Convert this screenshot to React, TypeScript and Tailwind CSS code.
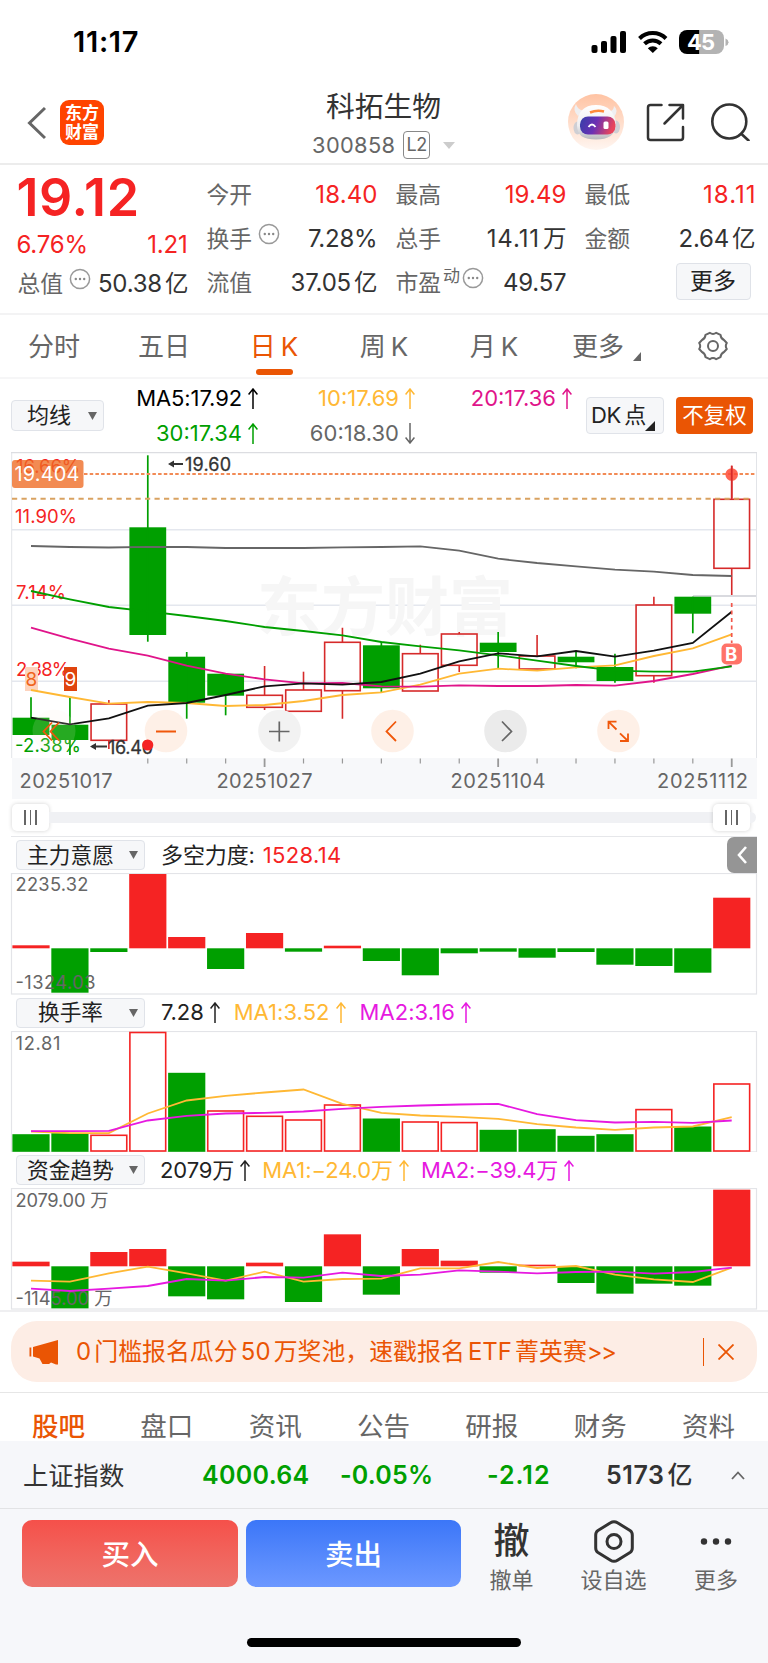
import React from 'react';

const RED = '#f52323';
const GREEN = '#009f00';
const YELLOW = '#ffb834';
const MAGENTA = '#e619e0';
const PINK = '#e0148a';
const CANDLE_RED = '#d62a2a';

const cx = (i: number) => 31 + i * 38.93;

type Pts = number[];
const line = (ys: Pts) => ys.map((y, i) => `${cx(i).toFixed(1)},${y}`).join(' ');

function Arrow({ down = false }: { down?: boolean }) {
  return (
    <svg viewBox="0 0 10 21" className="ml-1.5 h-[21px] w-2.5 shrink-0" fill="none" stroke="currentColor" strokeWidth="1.5">
      <path d={down ? 'M5 0V20M0.600 14.500L5 20L9.400 14.500' : 'M5 21V1M0.600 6.500L5 1L9.400 6.500'} />
    </svg>
  );
}

function Info() {
  return (
    <svg viewBox="0 0 22 22" className="mb-2.5 ml-1.5 h-[22px] w-[22px] shrink-0" fill="none" stroke="#999" strokeWidth="1.5">
      <circle cx="11" cy="11" r="9.6" />
      <g fill="#888" stroke="none">
        <circle cx="6.8" cy="11" r="1.2" />
        <circle cx="11" cy="11" r="1.2" />
        <circle cx="15.2" cy="11" r="1.2" />
      </g>
    </svg>
  );
}

function StatusBar() {
  return (
    <div className="flex h-[84px] items-center justify-between pl-[73px] pr-[38px]">
      <span className="text-[29px] font-semibold tracking-[0.7px] text-black">11:17</span>
      <svg viewBox="590 28 140 28" className="h-7 w-[140px]">
        <rect x="591.5" y="45" width="6" height="8" rx="2" />
        <rect x="601" y="41" width="6" height="12" rx="2" />
        <rect x="610.5" y="36" width="6" height="17" rx="2" />
        <rect x="620" y="31" width="6" height="22" rx="2" />
        <g fill="none" stroke="#000" strokeWidth="4">
          <path d="M639.5 38.5a19 19 0 0 1 26.500 0" />
          <path d="M644.5 43.800a12 12 0 0 1 16.500 0" />
        </g>
        <path d="M647.800 48.200a7.200 7.200 0 0 1 10 0L652.800 53Z" />
        <path d="M687 30h12.500v24H687a8 8 0 0 1-8-8v-8a8 8 0 0 1 8-8Z" />
        <path d="M699.500 30H716a8 8 0 0 1 8 8v8a8 8 0 0 1-8 8h-16.500Z" fill="#b3b3b3" />
        <path d="M725.500 38.500q3 1.200 3 3.800t-3 3.800Z" fill="#b3b3b3" />
        <text x="687" y="50" fill="#fff" fontSize="22" fontWeight="700" textLength="28" fontFamily="Inter, sans-serif">45</text>
      </svg>
    </div>
  );
}

function Header() {
  return (
    <header className="flex h-[81px] border-b-2 border-[#ececec]">
      <div className="flex w-[220px] items-center pb-[2px] pl-[26px]">
        <svg viewBox="0 0 20 34" className="h-[34px] w-5" fill="none" stroke="#666" strokeWidth="3">
          <path d="M19 2L3.500 17L19 32" />
        </svg>
        <div className="ml-[14px] flex h-[44.5px] w-[44px] flex-col items-center justify-center rounded-[9px] bg-[#ff4400] text-[17px] font-bold leading-[19px] text-white">
          <span>东方</span>
          <span>财富</span>
        </div>
      </div>
      <div className="flex flex-1 flex-col items-center pr-px">
        <h1 className="mt-[5px] text-[28.8px] leading-9 text-[#333]">科拓生物</h1>
        <div className="mt-[3px] flex items-center leading-[34px]">
          <span className="text-[21.8px] tracking-[0.35px] text-[#666]">300858</span>
          <span className="ml-2 flex h-[27.500px] w-[26.500px] items-center justify-center rounded-[4px] border-[1.5px] border-[#888] text-[18px] tracking-[-0.5px] text-[#666]">L2</span>
          <svg viewBox="0 0 12 7" className="ml-[13px] h-[7px] w-3">
            <path d="M0 0H12L6 7Z" fill="#ccc" />
          </svg>
        </div>
      </div>
      <div className="flex w-[220px] items-start justify-end pr-[18px] pt-[9px]">
        <svg viewBox="0 0 56 56" className="mt-px h-14 w-14">
          <defs>
            <linearGradient id="halo" x1="0" y1="0" x2="0" y2="1">
              <stop offset="0" stopColor="#ffc3a3" />
              <stop offset="1" stopColor="#fff6f1" />
            </linearGradient>
            <linearGradient id="head" x1="0" y1="0" x2="0" y2="1">
              <stop offset="0" stopColor="#fff" />
              <stop offset="0.600" stopColor="#eeeef0" />
              <stop offset="1" stopColor="#b9b9be" />
            </linearGradient>
            <linearGradient id="visor" x1="0" y1="0" x2="1" y2="0.200">
              <stop offset="0" stopColor="#3440a8" />
              <stop offset="0.500" stopColor="#6b30b4" />
              <stop offset="1" stopColor="#e8455c" />
            </linearGradient>
          </defs>
          <circle cx="28" cy="28" r="28" fill="url(#halo)" />
          <path d="M8 10Q4 16 10 22L15 17Q9 15 8 10ZM46 12Q51 16 46 23L40 18Q46 17 46 12Z" fill="#efeff1" />
          <ellipse cx="9.500" cy="34" rx="4" ry="6.500" fill="#cfcfd4" />
          <ellipse cx="48" cy="33" rx="4" ry="6.500" fill="#cfcfd4" />
          <path d="M28 11C40 11 47 18 48 30C48 41 40 45.500 28 45.500S9 42 9 31C9 18 16 11 28 11Z" fill="url(#head)" />
          <path d="M22 18.500Q29 15.500 36 17.500" stroke="#ff8b3c" strokeWidth="2.500" fill="none" />
          <rect x="12" y="22.500" width="35.500" height="18" rx="8" fill="url(#visor)" />
          <path d="M20.500 33q3.500-5 7 0" stroke="#fff" strokeWidth="1.800" fill="none" />
          <rect x="35.500" y="27.500" width="5" height="7.500" rx="1.500" fill="#fff" />
        </svg>
        <svg viewBox="0 0 40 40" className="ml-[21px] mt-[9px] h-10 w-10" fill="none" stroke="#333" strokeWidth="2.500" strokeLinecap="round" strokeLinejoin="round">
          <path d="M16.500 3H5.500Q3 3 3 5.500V35.500Q3 38 5.500 38H35.500Q38 38 38 35.500V25M24.500 3H38V16.500M38 3L19.500 21.500" />
        </svg>
        <svg viewBox="0 0 40 40" className="ml-[25px] mt-2 h-10 w-10" fill="none" stroke="#333" strokeWidth="2.600" strokeLinecap="round">
          <circle cx="19.300" cy="20.500" r="17" />
          <path d="M31.500 33L38.500 39.500" />
        </svg>
      </div>
    </header>
  );
}

type CellProps = { label: React.ReactNode; value: string; unit?: string; red?: boolean; info?: boolean; track?: string };

function Cell({ label, value, unit, red = false, info = false, track = 'tracking-[-0.2px]' }: CellProps) {
  return (
    <div className="flex h-[44.2px] w-[170px] items-center justify-between whitespace-nowrap">
      <span className="flex items-center text-[22.8px] text-[#666]">
        {label}
        {info && <Info />}
      </span>
      <span className={`-mr-px flex text-[24px] ${red ? 'text-[#f52323]' : 'text-[#333]'}`}>
        <span className={track}>{value}</span>
        {unit && <span className="ml-[3px] text-[23.500px]">{unit}</span>}
      </span>
    </div>
  );
}

function Quote() {
  return (
    <section className="flex h-[150px] gap-[19px] border-b-2 border-[#f3f3f4] pl-[17.5px] pt-[8px]">
      <div className="w-[170px]">
        <div className="flex h-[50px] items-center text-[52px] font-semibold tracking-[0.6px] text-[#f52323]">
          <span className="-ml-px">19.12</span>
        </div>
        <div className="flex h-[44px] items-center justify-between text-[24px] tracking-[-0.2px] text-[#f52323]">
          <span className="-ml-px">6.76%</span>
          <span>1.21</span>
        </div>
        <div className="-mt-[5px]">
          <Cell label="总值" value="50.38" unit="亿" info />
        </div>
      </div>
      <div>
        <Cell label="今开" value="18.40" red track="tracking-[0.1px]" />
        <Cell label="换手" value="7.28%" info />
        <Cell label="流值" value="37.05" unit="亿" />
      </div>
      <div>
        <Cell label="最高" value="19.49" red track="tracking-[0.1px]" />
        <Cell label="总手" value="14.11" unit="万" track="tracking-[0.9px]" />
        <Cell
          label={
            <>
              市盈
              <span className="mb-3.5 ml-0.5 -mr-1 text-[17px]">动</span>
            </>
          }
          value="49.57"
          info
        />
      </div>
      <div>
        <Cell label="最低" value="18.11" red track="tracking-[1px] -mr-px" />
        <Cell label="金额" value="2.64" unit="亿" />
        <div className="flex h-[41px] items-center justify-end pr-1">
          <button className="h-[37px] w-[75px] rounded-[4px] border-[1.5px] border-[#dfe2e8] bg-[#f6f7f9] text-[23px] leading-[33px] text-[#222]">更多</button>
        </div>
      </div>
    </section>
  );
}

function PeriodTabs() {
  const tabs = ['分时', '五日', '日 K', '周 K', '月 K'];
  return (
    <nav className="-ml-px flex h-16 border-b-2 border-[#f6f6f7] text-[26px] text-[#666]">
      {tabs.map((t, i) => (
        <div key={t} className={i === 2 ? 'flex w-[110px] flex-col items-center text-[#ea5504]' : 'flex w-[110px] flex-col items-center'}>
          <span className="mt-3 whitespace-nowrap leading-[39px] [word-spacing:-2.500px]">{t}</span>
          {i === 2 && <span className="mt-[3px] h-[5.500px] w-[37px] rounded-[3px] bg-[#ea5504]" />}
        </div>
      ))}
      <div className="ml-[23px] mt-3 flex leading-[39px]">
        更多
        <svg viewBox="0 0 8 9" className="ml-[9px] mt-[25px] h-[9px] w-2">
          <path d="M8 0V9H0Z" fill="#666" />
        </svg>
      </div>
      <svg viewBox="0 0 30 30" className="ml-[57px] mt-4 h-[30px] w-[30px]" fill="none" stroke="#666" strokeWidth="2">
        <path d="M11.800 1.800Q15 4 18.200 1.800L22.500 3.800Q22.800 7.500 26 9L28.800 12Q26.800 15 28.800 18L26 21Q22.800 22.500 22.500 26.200L18.200 28.200Q15 26 11.800 28.200L7.500 26.200Q7.200 22.500 4 21L1.200 18Q3.200 15 1.200 12L4 9Q7.200 7.500 7.500 3.800Z" strokeLinejoin="round" />
        <circle cx="15" cy="15" r="5" />
      </svg>
    </nav>
  );
}

function Ma({ text, cls, down = false }: { text: string; cls: string; down?: boolean }) {
  return (
    <span className={`flex w-[157px] items-center justify-end ${cls}`}>
      {text}
      <Arrow down={down} />
    </span>
  );
}

function MaRow() {
  return (
    <section className="flex h-[73px] pl-[11px]">
      <button className="mt-[21px] flex h-[31px] w-[93px] items-center rounded-[4px] border-[1.5px] border-[#e0e3e9] bg-[#f6f7f9] pl-[15px] text-[22px] text-[#222]">
        均线
        <svg viewBox="0 0 9 8" className="ml-[17px] h-2 w-[9px]">
          <path d="M0 0H9L4.500 8Z" fill="#666" />
        </svg>
      </button>
      <div className="ml-[-2px] w-[471px] text-[22px] leading-[35px]">
        <div className="-ml-px flex">
          <Ma text="MA5:17.92" cls="mt-[2px] text-black tracking-[-0.1px]" />
          <Ma text="10:17.69" cls="mt-[2px] text-[#ffb834]" />
          <Ma text="20:17.36" cls="mt-[2px] text-[#e0148a]" />
        </div>
        <div className="-ml-px flex">
          <Ma text="30:17.34" cls="text-[#009f00]" />
          <Ma text="60:18.30" cls="text-[#666]" down />
        </div>
      </div>
      <button className="ml-[13px] mt-[18px] flex h-[37px] w-[78px] items-center rounded-[4px] border-[1.5px] border-[#e0e3e9] bg-[#f6f7f9] pl-1 text-[22px] text-[#222]">
        <span className="whitespace-nowrap tracking-[-0.5px] [word-spacing:-2px]">DK 点</span>
        <svg viewBox="0 0 10 10" className="-ml-px mt-[20px] h-2.5 w-2.5">
          <path d="M10 0V10H0Z" fill="#222" />
        </svg>
      </button>
      <button className="ml-3 mt-[18px] h-[37px] w-[77px] rounded-[4px] bg-[#ea5504] text-[21.5px] text-white">不复权</button>
    </section>
  );
}

type Candle = [number, number, number, number, 'r' | 'g'];
const candles: Candle[] = [
  [717.7, 735, 697.3, 735, 'g'],
  [724.7, 740, 697.3, 755, 'g'],
  [704, 740.3, 700, 749, 'r'],
  [527.3, 635, 455.3, 641.7, 'g'],
  [656.7, 702.7, 652, 718.7, 'g'],
  [673.7, 695.7, 673.7, 715.3, 'g'],
  [695.3, 707.3, 666, 710, 'r'],
  [690, 711.3, 671.7, 711.3, 'r'],
  [642.3, 690.7, 627.7, 718.7, 'r'],
  [645.3, 688.3, 641.7, 692.3, 'g'],
  [653.7, 691, 644.7, 691, 'r'],
  [634, 665.3, 632, 672, 'r'],
  [642.7, 652, 632, 668.3, 'g'],
  [656, 669, 635, 669, 'r'],
  [656.7, 662.3, 651.7, 668.3, 'g'],
  [667, 681, 653.7, 682.7, 'g'],
  [605, 675.7, 596.7, 682.7, 'r'],
  [596.7, 613.7, 596.7, 633.3, 'g'],
  [499.3, 568.3, 465.7, 595, 'r'],
];

const ma60 = [546, 547, 547.5, 546.8, 547, 548, 548, 548, 547.3, 547, 546.3, 550.7, 558.7, 563, 566.3, 569.7, 571.7, 575, 576];
const ma30 = [591, 599.3, 607, 611.3, 616, 621, 627, 631, 635.3, 642, 646.3, 650.3, 655.3, 660.7, 666, 670.7, 671.7, 671.7, 666.3];
const ma20 = [627.7, 638.7, 648.7, 655.7, 665.7, 673.7, 679.3, 683.3, 683, 686.3, 686.7, 685.3, 686, 686, 685, 685.7, 681, 674, 665.7];
const ma10 = [690, 697, 703.7, 702, 703, 706, 705, 701, 695, 692.3, 684.7, 673.7, 668.7, 670.7, 667.3, 665.3, 656, 648.3, 634.3];
const ma5 = [717.7, 724.3, 718.3, 705.7, 703, 695, 686.3, 683.3, 684.7, 682, 673.7, 661.3, 653.3, 656.3, 651, 656.7, 650.7, 643, 611.7];

function CandleChart() {
  return (
    <svg viewBox="0 452 768 347" className="block h-[347px] w-[768px]" fontFamily="Inter, 'Noto Sans CJK SC', sans-serif">
      <rect x="12" y="758" width="745" height="41" fill="#f7f8fa" />
      <g stroke="#e4e7ee" strokeWidth="1.500">
        <path d="M12 529.7H756M12 605.3H756M12 681.3H756" />
        <path d="M11.700 452V758M756.500 452V758" stroke="#e2e4e8" strokeWidth="1" />
        <path d="M11 452.500H757" stroke="#dcdde1" />
      </g>
      <text x="257" y="630" fontSize="64" fontWeight="700" fill="#f6f6f6" textLength="256" lengthAdjust="spacingAndGlyphs">东方财富</text>
      <path d="M693 596H756" stroke="#d9dadf" strokeWidth="2" />
      <g fontSize="18.500" fill={RED}>
        <text x="16" y="472.500" textLength="64">16.66%</text>
        <text x="15" y="523" textLength="62">11.90%</text>
        <text x="16" y="599" textLength="50">7.14%</text>
        <text x="16" y="676" textLength="54">2.38%</text>
      </g>
      {candles.map(([t, b, h, l, c], i) => {
        const x = cx(i);
        return c === 'g' ? (
          <g key={i} fill={GREEN}>
            <rect x={x - 18.4} y={t} width="36.800" height={b - t} />
            <path d={`M${x} ${h}V${l}`} stroke={GREEN} strokeWidth="1.700" />
          </g>
        ) : (
          <g key={i} fill="none" stroke={CANDLE_RED} strokeWidth="1.600">
            <rect x={x - 17.8} y={t} width="35.600" height={b - t} />
            <path d={`M${x} ${h}V${t}M${x} ${b}V${l}`} />
          </g>
        );
      })}
      <path d="M12 498.700H751" stroke="#d9a261" strokeWidth="2" strokeDasharray="5.200 4.300" />
      <rect x="25" y="667" width="13" height="24" fill="#fdd3bd" />
      <text x="25.500" y="686" fontSize="19" fill="#f0631a">8</text>
      <rect x="64" y="667" width="13" height="24" fill="#e0440e" />
      <text x="64.500" y="686" fontSize="19" fill="#fff">9</text>
      <g fill="none" strokeWidth="1.800">
        <polyline points={line(ma60)} stroke="#666" />
        <polyline points={line(ma10)} stroke={YELLOW} />
        <polyline points={line(ma20)} stroke={PINK} />
        <polyline points={line(ma30)} stroke={GREEN} />
        <polyline points={line(ma5)} stroke="#111" />
      </g>
      <rect x="12" y="460" width="71.500" height="28" rx="3" fill="#ee6a22" fillOpacity="0.780" />
      <path d="M84 474H755" stroke="#f28a55" strokeWidth="1.900" strokeDasharray="3.500 2.200" />
      <text x="14.500" y="481" fontSize="20" fill="#fff" textLength="65">19.404</text>
      <circle cx="731.700" cy="474.500" r="6.300" fill="#ff4a35" fillOpacity="0.850" />
      <path d="M731.700 465.700V498" stroke={CANDLE_RED} strokeWidth="1.700" />
      <g stroke="#333" strokeWidth="2" fill="#333">
        <path d="M170 464H183" />
        <path d="M168 464L174 460.500V467.500Z" stroke="none" />
        <path d="M92 746.500H107" />
        <path d="M90 746.500L96 743V750Z" stroke="none" />
      </g>
      <g fill="#333" stroke="#333" strokeWidth="0.300" fontSize="18">
        <text x="185" y="470.500" textLength="46">19.60</text>
        <text x="108" y="753.500" textLength="45">16.40</text>
      </g>
      <path d="M731.700 603V643" stroke="#f2574b" strokeWidth="1.700" strokeDasharray="4 3.500" />
      <rect x="721.500" y="643.500" width="20.500" height="21" rx="5" fill="#ff7368" />
      <text x="725" y="661" fontSize="18.500" fontWeight="700" fill="#fff">B</text>
      <text x="15" y="752" fontSize="18.500" fill={GREEN} textLength="66">-2.38%</text>
      <g fill="#feeee4" fillOpacity="0.900">
        <circle cx="54" cy="731" r="21.500" fillOpacity="0.150" />
        <circle cx="166" cy="731" r="21.300" />
        <circle cx="392.500" cy="731" r="21.300" />
        <circle cx="618.500" cy="731" r="21.300" />
      </g>
      <circle cx="279.500" cy="731" r="21.300" fill="#f2f2f2" />
      <circle cx="505.500" cy="731" r="21.300" fill="#ebebeb" />
      <circle cx="147.700" cy="745" r="5.600" fill="#f52323" />
      <g fill="none" stroke="#f0570a" strokeWidth="1.800">
        <path d="M52 722.500L43.500 731.500L52 740.500M59 722.500L50.500 731.500L59 740.500" />
        <path d="M156 731.500H176M396 721.500L386.500 731.500L396 741" />
        <path d="M608.500 729V721.700H616.500M608.500 721.700L616.500 729.500M628 733.500V741H620M628 741L620 733.300" />
      </g>
      <g fill="none" stroke="#666" strokeWidth="1.700">
        <path d="M269 731.500H289.500M279.300 721.500V741.500M502 721.500L511.500 731.500L502 741" />
      </g>
      <g stroke="#999" strokeWidth="1.200">
        {candles.map((_, i) => (i < 3 ? null : <path key={i} d={`M${cx(i)} 758.500V${i % 6 === 0 ? 767 : 763.5}`} strokeWidth={i % 6 === 0 ? 1.8 : 1.2} />))}
      </g>
      <g fill="#666" fontSize="20">
        <text x="19.500" y="787.500" textLength="93">20251017</text>
        <text x="216.500" y="787.500" textLength="96">20251027</text>
        <text x="450.500" y="787.500" textLength="95">20251104</text>
        <text x="657" y="787.500" textLength="91">20251112</text>
      </g>
    </svg>
  );
}

function Grip() {
  return (
    <div className="flex h-[27px] w-[37px] items-center justify-center gap-[4px] rounded-[5px] bg-white shadow-[0_0_4px_rgba(0,0,0,0.18)]">
      <span className="h-[15px] w-[1.500px] bg-[#666]" />
      <span className="h-[15px] w-[1.500px] bg-[#666]" />
      <span className="h-[15px] w-[1.500px] bg-[#666]" />
    </div>
  );
}

function RangeSlider() {
  return (
    <div className="flex h-[37px] items-center px-[12px]">
      <Grip />
      <div className="h-[11px] flex-1 bg-[#f0f1f4]" />
      <Grip />
      <div className="h-[11px] w-[6px] rounded-r-full bg-[#f0f1f4]" />
    </div>
  );
}

function IndicatorHead({ name, children, collapse = false, size = 'h-9' }: { name: string; children: React.ReactNode; collapse?: boolean; size?: string }) {
  return (
    <div className={`mx-[11px] flex items-center ${size}`}>
      <button className="ml-[5px] flex h-[30px] w-[129px] shrink-0 items-center rounded-[4px] border-[1.5px] border-[#e0e3e9] bg-[#f6f7f9] text-[21.7px] text-[#222]">
        <span className="w-[107px] text-center">{name}</span>
        <svg viewBox="0 0 9 8" className="ml-[5px] h-2 w-[9px]">
          <path d="M0 0H9L4.500 8Z" fill="#666" />
        </svg>
      </button>
      <div className="ml-4 flex flex-1 items-center whitespace-nowrap text-[22px] tracking-[-0.1px] text-[#222]">{children}</div>
      {collapse && (
        <div className="flex h-full w-[30px] items-center justify-center rounded-l-[7px] bg-[#959595]">
          <svg viewBox="0 0 10 18" className="h-[18px] w-2.5" fill="none" stroke="#fff" strokeWidth="2.600">
            <path d="M9 1L2 9L9 17" />
          </svg>
        </div>
      )}
    </div>
  );
}

const power = [945.3, 992.7, 952, 874, 937, 969, 933, 951.7, 945.7, 961, 975.3, 953.3, 951.7, 957.7, 952, 964.7, 966, 972.7, 897.7];
const turnover = [1133.7, 1132.7, 1134.3, 1031.5, 1072.3, 1110, 1115.3, 1119, 1104, 1118, 1121, 1121.6, 1129.3, 1128.7, 1135.3, 1133.7, 1108.6, 1126, 1083];
const turnoverRed = [2, 3, 5, 6, 7, 8, 10, 11, 16, 18];
const turnMa1 = [333, 338, 338, 279, 240, 226, 216, 207, 250, 277, 285, 289, 295, 311, 321, 328, 321, 318, 290].map((v) => 1020 + v / 3);
const turnMa2 = [332, 332, 331, 300, 286, 279, 277, 273, 265, 259, 255, 252, 250, 281, 299, 306, 304, 307, 300].map((v) => 1020 + v / 3);
const funds = [320, 460, 291, 282, 424, 433, 323, 441, 238, 419, 282, 317, 353, 329, 384, 416, 386, 392, 104].map((v) => 1155 + v / 3);
const fundMa1 = [377, 380, 355, 335, 355, 377, 350, 380, 372, 371, 340, 340, 321, 339, 333, 359, 373, 381, 338].map((v) => 1155 + v / 3);
const fundMa2 = [401, 408, 401, 393, 372, 377, 366, 368, 353, 363, 359, 346, 350, 355, 351, 350, 356, 351, 338].map((v) => 1155 + v / 3);

function SignedBars({ ys, zero }: { ys: number[]; zero: number }) {
  return (
    <g>
      {ys.map((y, i) => (
        <rect key={i} x={cx(i) - 18.6} y={Math.min(y, zero)} width="37.200" height={Math.abs(y - zero)} fill={y < zero ? RED : GREEN} />
      ))}
    </g>
  );
}

function Frame({ top, children }: { top: number; children: React.ReactNode }) {
  return (
    <svg viewBox={`0 ${top} 768 121.500`} className="block h-[121.500px] w-[768px]" fontFamily="Inter, 'Noto Sans CJK SC', sans-serif">
      <rect x="11.500" y={top + 0.5} width="745" height="120.500" fill="none" stroke="#e3e4e8" strokeWidth="1.200" />
      {children}
    </svg>
  );
}

function Indicators() {
  return (
    <section>
      <div className="mx-[11px] h-px bg-[#e6e7ea]" />
      <IndicatorHead name="主力意愿" collapse>
        <span>多空力度:</span>
        <span className="ml-2 tracking-[0.3px] text-[#f52323]">1528.14</span>
      </IndicatorHead>
      <Frame top={873}>
        <SignedBars ys={power} zero={948.3} />
        <g fill="#666" fontSize="18.300">
          <text x="15.500" y="891" textLength="73">2235.32</text>
          <text x="15.500" y="989" textLength="80">-1324.03</text>
        </g>
      </Frame>
      <IndicatorHead name="换手率">
        <span>7.28</span>
        <Arrow />
        <span className="ml-3.5 tracking-[0.05px] text-[#ffb834]">MA1:3.52</span>
        <span className="text-[#ffb834]"><Arrow /></span>
        <span className="ml-3.5 tracking-[0.05px] text-[#e619e0]">MA2:3.16</span>
        <span className="text-[#e619e0]"><Arrow /></span>
      </IndicatorHead>
      <Frame top={1030.5}>
        {turnover.map((y, i) =>
          turnoverRed.includes(i) ? (
            <rect key={i} x={cx(i) - 17.9} y={y + 0.5} width="35.800" height={1150 - y} fill="none" stroke={RED} strokeWidth="1.600" />
          ) : (
            <rect key={i} x={cx(i) - 18.6} y={y} width="37.200" height={1151.3 - y} fill={GREEN} />
          ),
        )}
        <text x="15.500" y="1049" fill="#666" fontSize="18.300" textLength="45">12.81</text>
        <g fill="none" strokeWidth="1.800">
          <polyline points={line(turnMa1)} stroke={YELLOW} />
          <polyline points={line(turnMa2)} stroke={MAGENTA} />
        </g>
      </Frame>
      <IndicatorHead name="资金趋势">
        <span className="-ml-px">2079万</span>
        <Arrow />
        <span className="ml-3 text-[#ffb834]">MA1:−24.0万</span>
        <span className="text-[#ffb834]"><Arrow /></span>
        <span className="ml-3 text-[#e619e0]">MA2:−39.4万</span>
        <span className="text-[#e619e0]"><Arrow /></span>
      </IndicatorHead>
      <Frame top={1188}>
        <SignedBars ys={funds} zero={1266.3} />
        <g fill="#666" fontSize="18.300">
          <text x="15.500" y="1206.500" textLength="93">2079.00 万</text>
          <text x="15.500" y="1304.500" textLength="97">-1145.00 万</text>
        </g>
        <g fill="none" strokeWidth="1.800">
          <polyline points={line(fundMa1)} stroke={YELLOW} />
          <polyline points={line(fundMa2)} stroke={MAGENTA} />
        </g>
      </Frame>
    </section>
  );
}

function Banner() {
  return (
    <section className="h-[83.500px] border-b-[1.5px] border-t-2 border-b-[#e6e6e6] border-t-[#efeff1] px-[11px] pt-[9.500px]">
      <div className="flex h-[61px] items-center rounded-[26px] bg-[#fdede5] pl-[18px] pr-[23px] text-[#ea5504]">
        <svg viewBox="0 0 30 26" className="h-[26px] w-[30px]" fill="currentColor">
          <path d="M0.500 8.500H2.300V17.500H0.500ZM4 8L29 1V25.500H27L22 23.500L20 25H13.500L10.500 19.500L4 17.500Z" />
        </svg>
        <span className="ml-[17px] whitespace-nowrap text-[23.900px] [word-spacing:-3.500px]">
          0 门槛报名瓜分 50 万奖池，速戳报名 ETF 菁英赛<span className="tracking-[-1.500px]">&gt;&gt;</span>
        </span>
        <span className="ml-auto h-7 w-[1.500px] bg-[#ea5504]" />
        <svg viewBox="0 0 16 16" className="ml-[14px] h-4 w-4" fill="none" stroke="currentColor" strokeWidth="1.800">
          <path d="M0.500 0.500L15.500 15.500M15.500 0.500L0.500 15.500" />
        </svg>
      </div>
    </section>
  );
}

function InfoTabs() {
  const tabs = ['股吧', '盘口', '资讯', '公告', '研报', '财务', '资料'];
  return (
    <nav className="flex h-12 items-end justify-between overflow-hidden pl-[32px] pr-[33px] text-[26.5px] leading-[30px] text-[#666]">
      {tabs.map((t, i) => (
        <span key={t} className={i === 0 ? 'font-medium text-[#ea5504]' : ''}>{t}</span>
      ))}
    </nav>
  );
}

function IndexBar() {
  return (
    <section className="flex h-[68px] items-center border-b-[1.5px] border-[#e2e3e5] bg-[#f6f7fa] pt-0.5 text-[25px] font-semibold">
      <span className="ml-[23px] w-[179px] text-[25.300px] font-normal text-[#333]">上证指数</span>
      <span className="w-[138px] tracking-[0.3px] text-[#009f00]">4000.64</span>
      <span className="w-[147px] tracking-[0.2px] text-[#009f00]">-0.05%</span>
      <span className="w-[119px] tracking-[1px] text-[#009f00]">-2.12</span>
      <span className="flex w-[125px] text-[#333]">
        <span className="tracking-[0.600px]">5173</span>
        <span className="ml-[3px] font-medium">亿</span>
      </span>
      <svg viewBox="0 0 14 9" className="h-[9px] w-3.5" fill="none" stroke="#666" strokeWidth="1.800">
        <path d="M1 8L7 1.500L13 8" />
      </svg>
    </section>
  );
}

function ActionBar() {
  return (
    <footer className="flex h-[154px] flex-col items-center justify-between bg-[#f6f7fa] pb-4 pt-[11px]">
      <div className="flex w-full pl-[22px]">
        <button className="h-[67px] w-[216px] rounded-[10px] bg-linear-to-b from-[#f5504a] to-[#ed736c] pt-[3px] text-[28.5px] font-medium text-white">买入</button>
        <button className="ml-2 h-[67px] w-[215px] rounded-[10px] bg-linear-to-b from-[#3b76f8] to-[#6c98ff] pt-[3px] text-[28.5px] font-medium text-white">卖出</button>
        <div className="flex w-[101px] flex-col items-center text-[22px] leading-[33px] text-[#666]">
          <span className="h-11 text-[36px] font-medium leading-[43px] text-[#333]">撤</span>
          撤单
        </div>
        <div className="flex w-[103px] flex-col items-center text-[22px] leading-[33px] text-[#666]">
          <svg viewBox="0 0 40 44" className="h-11 w-10" fill="none" stroke="#333" strokeWidth="3">
            <path d="M16.500 2.800Q20 0.500 23.500 2.800L36 10.500Q38.300 12 38.300 15V28Q38.300 31 36 32.500L23.500 40.200Q20 42.500 16.500 40.200L4 32.500Q1.700 31 1.700 28V15Q1.700 12 4 10.500Z" />
            <circle cx="20" cy="21.500" r="7" />
          </svg>
          设自选
        </div>
        <div className="flex w-[102px] flex-col items-center text-[22px] leading-[33px] text-[#666]">
          <svg viewBox="0 0 32 44" className="h-11 w-8" fill="#333">
            <circle cx="4" cy="21.500" r="3.200" />
            <circle cx="16" cy="21.500" r="3.200" />
            <circle cx="28" cy="21.500" r="3.200" />
          </svg>
          更多
        </div>
      </div>
      <div className="h-[9.500px] w-[274px] rounded-full bg-black" />
    </footer>
  );
}

export default function App() {
  return (
    <main className="h-[1663px] w-[768px] overflow-hidden bg-white font-[Inter,'Noto_Sans_CJK_SC',sans-serif]">
      <StatusBar />
      <Header />
      <Quote />
      <PeriodTabs />
      <MaRow />
      <CandleChart />
      <RangeSlider />
      <Indicators />
      <Banner />
      <InfoTabs />
      <IndexBar />
      <ActionBar />
    </main>
  );
}
